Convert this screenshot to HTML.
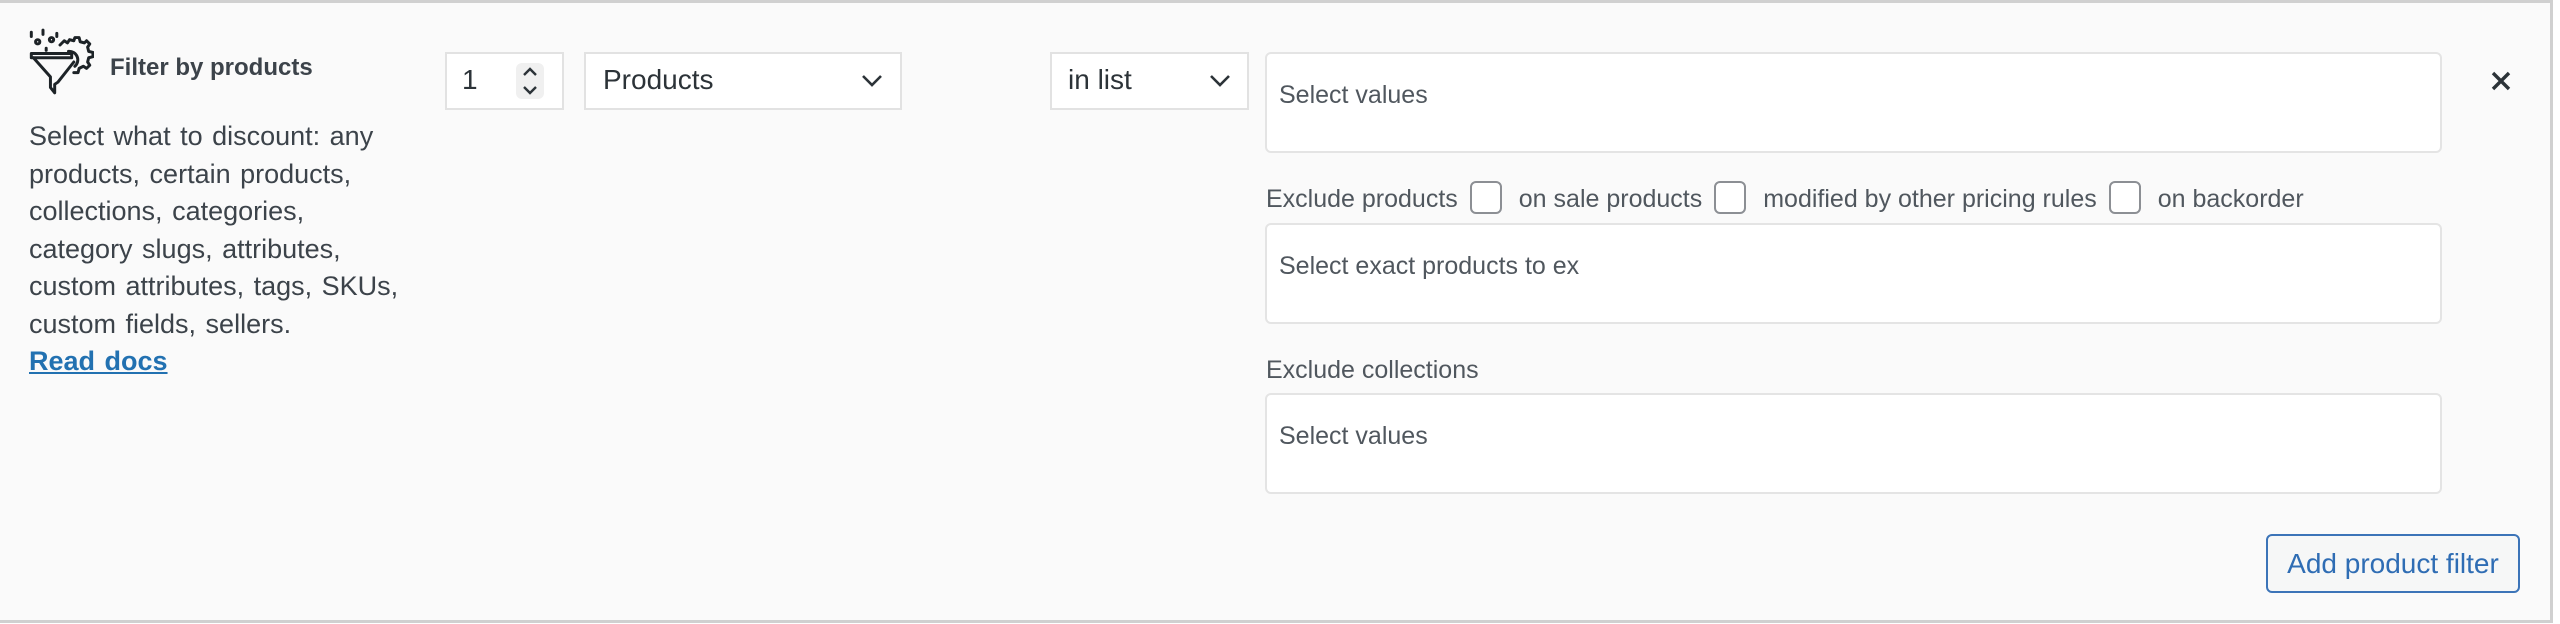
<!DOCTYPE html>
<html><head><meta charset="utf-8"><style>
*{box-sizing:border-box;margin:0;padding:0}
body{width:2560px;height:624px;background:#fff;font-family:"Liberation Sans",sans-serif;position:relative;overflow:hidden}
.panel{position:absolute;left:0;top:0;width:2553px;height:623px;background:#fafafa;border-top:3px solid #d0d0d0;border-right:3px solid #d0d0d0;border-bottom:3px solid #d0d0d0}
.a{position:absolute}
.title{left:110px;top:54px;font-size:24px;font-weight:bold;color:#3c434a;white-space:nowrap}
.desc{left:29px;top:118px;font-size:27px;line-height:37.5px;color:#3c434a;white-space:nowrap;word-spacing:2px}
.desc a{color:#2271b1;font-weight:bold;text-decoration:underline}
.box{background:#fff;border:2px solid #e2e2e2}
.sel{font-size:28px;color:#2c3338}
.field{background:#fff;border:2px solid #e4e4e4;border-radius:6px;font-size:25px;color:#50575e;padding:27px 0 0 12px;white-space:nowrap}
.lbl{font-size:25px;color:#50575e}
.cb{display:inline-block;width:32px;height:33px;border:2px solid #8c8f94;border-radius:6px;background:#fff;vertical-align:middle;margin:0 17px 0 12px;position:relative;top:-3px}
.btn{left:2266px;top:534px;width:254px;height:59px;border:2px solid #3c74b8;border-radius:6px;background:#f6f7f7;color:#2f6db4;font-size:28px;text-align:center;line-height:55px;white-space:nowrap}
</style></head><body>
<div class="panel"></div>
<svg class="a" style="left:26px;top:28px" width="68" height="68" viewBox="0 0 64 64" fill="none" stroke="#1d2327" stroke-width="2.8" stroke-linecap="round" stroke-linejoin="round">
<path d="M5 4v4M16 2v4M29 5v3"/><circle cx="11" cy="13" r="2"/><circle cx="24" cy="11" r="2"/><path d="M19 19v2"/>
<path d="M5 24h38M5 24v4h38v-4M7 28l16 18v10l4 5v-8l3-2l15-19"/>
<path d="M32 16l4-4 3 2 2-3 4 1 1-3h4l1 4 4 1 2-2 3 3-2 3 1 4 4 1v4l-4 1-1 4 2 3-3 3-3-2-4 2-1 4h-4"/>
<path d="M40 22a8 8 0 0 1 6 14"/>
</svg>
<div class="a title">Filter by products</div>
<div class="a desc">Select what to discount: any<br>products, certain products,<br>collections, categories,<br>category slugs, attributes,<br>custom attributes, tags, SKUs,<br>custom fields, sellers.<br><a>Read docs</a></div>

<div class="a box" style="left:445px;top:52px;width:119px;height:58px"></div>
<div class="a sel" style="left:462px;top:64px">1</div>
<svg class="a" style="left:516px;top:63px" width="28" height="36" viewBox="0 0 28 36"><rect x="0" y="0" width="28" height="36" rx="6" fill="#f0f0f0"/><path d="M8 12l6-6 6 6M8 24l6 6 6-6" stroke="#2c3338" stroke-width="2.4" fill="none"/></svg>

<div class="a box" style="left:584px;top:52px;width:318px;height:58px"></div>
<div class="a sel" style="left:603px;top:64px">Products</div>
<svg class="a" style="left:860px;top:72px" width="24" height="16" viewBox="0 0 24 16"><path d="M3 4l9 9 9-9" stroke="#2c3338" stroke-width="2.6" fill="none"/></svg>

<div class="a box" style="left:1050px;top:52px;width:199px;height:58px"></div>
<div class="a sel" style="left:1068px;top:64px">in list</div>
<svg class="a" style="left:1208px;top:72px" width="24" height="16" viewBox="0 0 24 16"><path d="M3 4l9 9 9-9" stroke="#2c3338" stroke-width="2.6" fill="none"/></svg>

<div class="a field" style="left:1265px;top:52px;width:1177px;height:101px">Select values</div>
<svg class="a" style="left:2490px;top:70px" width="22" height="22" viewBox="0 0 22 22"><path d="M3 3l16 16M19 3L3 19" stroke="#2c3338" stroke-width="3.4"/></svg>

<div class="a lbl" style="left:1266px;top:184px;white-space:nowrap">Exclude products<span class="cb"></span>on sale products<span class="cb"></span>modified by other pricing rules<span class="cb"></span>on backorder</div>

<div class="a field" style="left:1265px;top:223px;width:1177px;height:101px">Select exact products to ex</div>
<div class="a lbl" style="left:1266px;top:356px">Exclude collections</div>
<div class="a field" style="left:1265px;top:393px;width:1177px;height:101px">Select values</div>

<div class="a btn">Add product filter</div>
</body></html>
